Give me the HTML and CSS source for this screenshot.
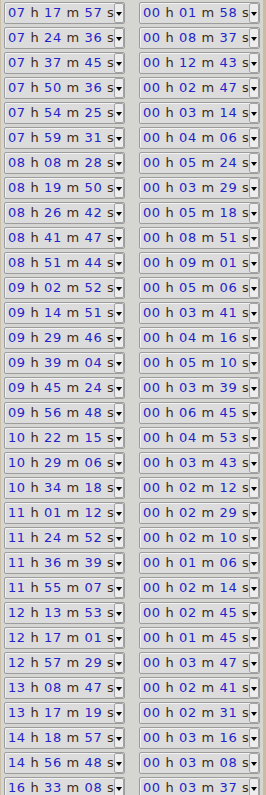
FILE: index.html
```html
<!DOCTYPE html>
<html>
<head>
<meta charset="utf-8">
<link rel="stylesheet" href="styles.css">
</head>
<body>
<div class="frame">
<div class="grid">
<div class="sel"><span class="txt"><b>07</b> h <b>17</b> m <b>57</b> s</span><span class="btn"></span></div>
<div class="sel"><span class="txt"><b>00</b> h <b>01</b> m <b>58</b> s</span><span class="btn"></span></div>
<div class="sel"><span class="txt"><b>07</b> h <b>24</b> m <b>36</b> s</span><span class="btn"></span></div>
<div class="sel"><span class="txt"><b>00</b> h <b>08</b> m <b>37</b> s</span><span class="btn"></span></div>
<div class="sel"><span class="txt"><b>07</b> h <b>37</b> m <b>45</b> s</span><span class="btn"></span></div>
<div class="sel"><span class="txt"><b>00</b> h <b>12</b> m <b>43</b> s</span><span class="btn"></span></div>
<div class="sel"><span class="txt"><b>07</b> h <b>50</b> m <b>36</b> s</span><span class="btn"></span></div>
<div class="sel"><span class="txt"><b>00</b> h <b>02</b> m <b>47</b> s</span><span class="btn"></span></div>
<div class="sel"><span class="txt"><b>07</b> h <b>54</b> m <b>25</b> s</span><span class="btn"></span></div>
<div class="sel"><span class="txt"><b>00</b> h <b>03</b> m <b>14</b> s</span><span class="btn"></span></div>
<div class="sel"><span class="txt"><b>07</b> h <b>59</b> m <b>31</b> s</span><span class="btn"></span></div>
<div class="sel"><span class="txt"><b>00</b> h <b>04</b> m <b>06</b> s</span><span class="btn"></span></div>
<div class="sel"><span class="txt"><b>08</b> h <b>08</b> m <b>28</b> s</span><span class="btn"></span></div>
<div class="sel"><span class="txt"><b>00</b> h <b>05</b> m <b>24</b> s</span><span class="btn"></span></div>
<div class="sel"><span class="txt"><b>08</b> h <b>19</b> m <b>50</b> s</span><span class="btn"></span></div>
<div class="sel"><span class="txt"><b>00</b> h <b>03</b> m <b>29</b> s</span><span class="btn"></span></div>
<div class="sel"><span class="txt"><b>08</b> h <b>26</b> m <b>42</b> s</span><span class="btn"></span></div>
<div class="sel"><span class="txt"><b>00</b> h <b>05</b> m <b>18</b> s</span><span class="btn"></span></div>
<div class="sel"><span class="txt"><b>08</b> h <b>41</b> m <b>47</b> s</span><span class="btn"></span></div>
<div class="sel"><span class="txt"><b>00</b> h <b>08</b> m <b>51</b> s</span><span class="btn"></span></div>
<div class="sel"><span class="txt"><b>08</b> h <b>51</b> m <b>44</b> s</span><span class="btn"></span></div>
<div class="sel"><span class="txt"><b>00</b> h <b>09</b> m <b>01</b> s</span><span class="btn"></span></div>
<div class="sel"><span class="txt"><b>09</b> h <b>02</b> m <b>52</b> s</span><span class="btn"></span></div>
<div class="sel"><span class="txt"><b>00</b> h <b>05</b> m <b>06</b> s</span><span class="btn"></span></div>
<div class="sel"><span class="txt"><b>09</b> h <b>14</b> m <b>51</b> s</span><span class="btn"></span></div>
<div class="sel"><span class="txt"><b>00</b> h <b>03</b> m <b>41</b> s</span><span class="btn"></span></div>
<div class="sel"><span class="txt"><b>09</b> h <b>29</b> m <b>46</b> s</span><span class="btn"></span></div>
<div class="sel"><span class="txt"><b>00</b> h <b>04</b> m <b>16</b> s</span><span class="btn"></span></div>
<div class="sel"><span class="txt"><b>09</b> h <b>39</b> m <b>04</b> s</span><span class="btn"></span></div>
<div class="sel"><span class="txt"><b>00</b> h <b>05</b> m <b>10</b> s</span><span class="btn"></span></div>
<div class="sel"><span class="txt"><b>09</b> h <b>45</b> m <b>24</b> s</span><span class="btn"></span></div>
<div class="sel"><span class="txt"><b>00</b> h <b>03</b> m <b>39</b> s</span><span class="btn"></span></div>
<div class="sel"><span class="txt"><b>09</b> h <b>56</b> m <b>48</b> s</span><span class="btn"></span></div>
<div class="sel"><span class="txt"><b>00</b> h <b>06</b> m <b>45</b> s</span><span class="btn"></span></div>
<div class="sel"><span class="txt"><b>10</b> h <b>22</b> m <b>15</b> s</span><span class="btn"></span></div>
<div class="sel"><span class="txt"><b>00</b> h <b>04</b> m <b>53</b> s</span><span class="btn"></span></div>
<div class="sel"><span class="txt"><b>10</b> h <b>29</b> m <b>06</b> s</span><span class="btn"></span></div>
<div class="sel"><span class="txt"><b>00</b> h <b>03</b> m <b>43</b> s</span><span class="btn"></span></div>
<div class="sel"><span class="txt"><b>10</b> h <b>34</b> m <b>18</b> s</span><span class="btn"></span></div>
<div class="sel"><span class="txt"><b>00</b> h <b>02</b> m <b>12</b> s</span><span class="btn"></span></div>
<div class="sel"><span class="txt"><b>11</b> h <b>01</b> m <b>12</b> s</span><span class="btn"></span></div>
<div class="sel"><span class="txt"><b>00</b> h <b>02</b> m <b>29</b> s</span><span class="btn"></span></div>
<div class="sel"><span class="txt"><b>11</b> h <b>24</b> m <b>52</b> s</span><span class="btn"></span></div>
<div class="sel"><span class="txt"><b>00</b> h <b>02</b> m <b>10</b> s</span><span class="btn"></span></div>
<div class="sel"><span class="txt"><b>11</b> h <b>36</b> m <b>39</b> s</span><span class="btn"></span></div>
<div class="sel"><span class="txt"><b>00</b> h <b>01</b> m <b>06</b> s</span><span class="btn"></span></div>
<div class="sel"><span class="txt"><b>11</b> h <b>55</b> m <b>07</b> s</span><span class="btn"></span></div>
<div class="sel"><span class="txt"><b>00</b> h <b>02</b> m <b>14</b> s</span><span class="btn"></span></div>
<div class="sel"><span class="txt"><b>12</b> h <b>13</b> m <b>53</b> s</span><span class="btn"></span></div>
<div class="sel"><span class="txt"><b>00</b> h <b>02</b> m <b>45</b> s</span><span class="btn"></span></div>
<div class="sel"><span class="txt"><b>12</b> h <b>17</b> m <b>01</b> s</span><span class="btn"></span></div>
<div class="sel"><span class="txt"><b>00</b> h <b>01</b> m <b>45</b> s</span><span class="btn"></span></div>
<div class="sel"><span class="txt"><b>12</b> h <b>57</b> m <b>29</b> s</span><span class="btn"></span></div>
<div class="sel"><span class="txt"><b>00</b> h <b>03</b> m <b>47</b> s</span><span class="btn"></span></div>
<div class="sel"><span class="txt"><b>13</b> h <b>08</b> m <b>47</b> s</span><span class="btn"></span></div>
<div class="sel"><span class="txt"><b>00</b> h <b>02</b> m <b>41</b> s</span><span class="btn"></span></div>
<div class="sel"><span class="txt"><b>13</b> h <b>17</b> m <b>19</b> s</span><span class="btn"></span></div>
<div class="sel"><span class="txt"><b>00</b> h <b>02</b> m <b>31</b> s</span><span class="btn"></span></div>
<div class="sel"><span class="txt"><b>14</b> h <b>18</b> m <b>57</b> s</span><span class="btn"></span></div>
<div class="sel"><span class="txt"><b>00</b> h <b>03</b> m <b>16</b> s</span><span class="btn"></span></div>
<div class="sel"><span class="txt"><b>14</b> h <b>56</b> m <b>48</b> s</span><span class="btn"></span></div>
<div class="sel"><span class="txt"><b>00</b> h <b>03</b> m <b>08</b> s</span><span class="btn"></span></div>
<div class="sel"><span class="txt"><b>16</b> h <b>33</b> m <b>08</b> s</span><span class="btn"></span></div>
<div class="sel"><span class="txt"><b>00</b> h <b>03</b> m <b>37</b> s</span><span class="btn"></span></div>
</div>
</div>
</body>
</html>
```
FILE: styles.css
```css
html, body {
  margin: 0;
  padding: 0;
  height: 795px;
  overflow: hidden;
  background: #d6d3cc;
}
.frame {
  height: 795px;
  border-left: 1px solid #cbbfa8;
  border-right: 3px solid #cbbba0;
  background: #d5d5d2;
  box-sizing: border-box;
  padding: 2px 0 0 3px;
}
.grid {
  display: grid;
  grid-template-columns: 121px 121px;
  grid-auto-rows: 22px;
  column-gap: 14px;
  row-gap: 3px;
}
.sel {
  display: flex;
  align-items: center;
  height: 22px;
  box-sizing: border-box;
  border: 1px solid #9c9c9c;
  border-radius: 2px;
  background: #dcdcdc;
  box-shadow: inset 1px 1px 0 #f2f2f2;
  padding-left: 3px;
  overflow: hidden;
}
.txt {
  flex: 1;
  min-width: 0;
  white-space: nowrap;
  font-family: "DejaVu Sans", sans-serif;
  font-size: 13px;
  line-height: 18px;
  letter-spacing: 0.6px;
  color: #3c2a14;
}
.txt b {
  font-weight: normal;
  color: #2424c8;
}
.btn {
  position: relative;
  flex: none;
  width: 10px;
  height: 20px;
  box-sizing: border-box;
  border: 1px solid #a2a2a2;
  border-radius: 2px;
  background: #ededed;
}
.btn::after {
  content: "";
  position: absolute;
  left: 1px;
  top: 8px;
  border-left: 3px solid transparent;
  border-right: 3px solid transparent;
  border-top: 4px solid #000;
}
```
